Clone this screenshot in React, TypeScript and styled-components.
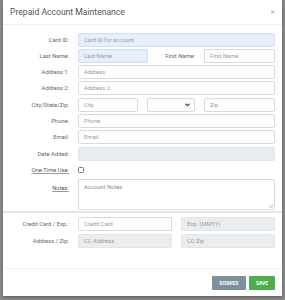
import React from 'react';
import styled, { createGlobalStyle } from 'styled-components';

const GlobalStyle = createGlobalStyle`
  html, body {
    margin: 0;
    padding: 0;
    background: #8a8a8a;
    font-family: Roboto, "Liberation Sans", Arial, sans-serif;
  }
  body {
    width: 285px;
    height: 300px;
    overflow: hidden;
  }
`;

const Modal = styled.div`
  margin-left: 3px;
  width: 279px;
  height: 296px;
  background: #fff;
  display: flex;
  flex-direction: column;
  box-shadow: 0 1px 3px rgba(0, 0, 0, 0.35);
`;

const Header = styled.div`
  height: 25px;
  display: flex;
  align-items: center;
  justify-content: space-between;
  padding: 0 7px 0 7px;
  border-bottom: 1px solid #eceeef;
  box-sizing: border-box;
`;

const Title = styled.h4`
  margin: 0;
  font-size: 8.6px;
  font-weight: 400;
  color: #555;
`;

const Close = styled.span`
  font-size: 9px;
  color: #b5b5b5;
  line-height: 1;
`;

const Body = styled.div`
  padding: 7.5px 7px 0 0;
  display: flex;
  flex-direction: column;
  gap: 2.3px;
`;

const Row = styled.div<{ $tall?: boolean }>`
  display: grid;
  grid-template-columns: 66px 1fr;
  column-gap: 9px;
  align-items: ${p => (p.$tall ? 'start' : 'center')};
  min-height: 14px;
`;

const Label = styled.label<{ $abbr?: boolean; $top?: boolean }>`
  text-align: right;
  font-size: 5.8px;
  color: ${p => (p.$abbr ? '#555' : '#666')};
  text-decoration: ${p => (p.$abbr ? 'underline' : 'none')};
  text-decoration-color: #999;
  white-space: nowrap;
  padding-top: ${p => (p.$top ? '6px' : '0')};
`;

const Input = styled.input<{ $variant?: 'fill' | 'disabled' }>`
  box-sizing: border-box;
  width: 100%;
  height: 14px;
  padding: 0 5px;
  font-family: inherit;
  font-size: 5.8px;
  color: #555;
  border-radius: 2px;
  outline: none;
  border: 1px solid
    ${p => (p.$variant === 'fill' ? '#d2dcf2' : p.$variant === 'disabled' ? '#e3e6e9' : '#d6dadf')};
  background: ${p =>
    p.$variant === 'fill' ? '#e8effc' : p.$variant === 'disabled' ? '#eaedf0' : '#fff'};
  &::placeholder {
    color: #9a9a9a;
  }
`;

const Pair = styled.div`
  display: grid;
  grid-template-columns: 70px 1fr 71px;
  column-gap: 9px;
  align-items: center;
`;

const CityRow = styled.div`
  display: grid;
  grid-template-columns: 60px 48px 1fr;
  column-gap: 9px;
`;

const Select = styled.div`
  box-sizing: border-box;
  height: 14px;
  border: 1px solid #d6dadf;
  border-radius: 2px;
  display: flex;
  align-items: center;
  justify-content: flex-end;
  padding-right: 4px;
`;

const Halves = styled.div`
  display: grid;
  grid-template-columns: 1fr 1fr;
  column-gap: 9px;
`;

const Check = styled.span`
  width: 6px;
  height: 6px;
  border: 1px solid #777;
  border-radius: 1.5px;
  box-sizing: border-box;
  display: block;
`;

const NotesBox = styled.div`
  position: relative;
`;

const Notes = styled.textarea`
  box-sizing: border-box;
  width: 100%;
  height: 31px;
  padding: 4px 5px;
  font-family: inherit;
  font-size: 5.8px;
  border: 1px solid #d6dadf;
  border-radius: 2px;
  resize: none;
  outline: none;
  margin: 0;
  display: block;
  &::placeholder {
    color: #8a8a8a;
  }
`;

const Grip = styled.svg`
  position: absolute;
  right: 2px;
  bottom: 2px;
`;

const Divider = styled.div`
  height: 2px;
  background: #e6e6e6;
  margin: 1px 0 4px;
`;

const CardBody = styled(Body)`
  padding-top: 0;
  gap: 3px;
`;

const Spacer = styled.div`
  flex: 1;
`;

const Footer = styled.div`
  border-top: 1px solid #f0f0f0;
  padding: 7px 7px 6px;
  display: flex;
  justify-content: flex-end;
  gap: 3px;
`;

const Button = styled.button<{ $kind: 'dismiss' | 'save' }>`
  height: 14px;
  padding: 0;
  width: ${p => (p.$kind === 'dismiss' ? '34px' : '26px')};
  border: none;
  border-radius: 1px;
  font-family: inherit;
  font-size: 4.8px;
  font-weight: 700;
  color: #fff;
  text-transform: uppercase;
  background: ${p => (p.$kind === 'dismiss' ? '#7c919c' : '#4cae4f')};
`;

const Chevron = () => (
  <svg width="5" height="4" viewBox="0 0 10 7">
    <path d="M1 1l4 4 4-4" fill="none" stroke="#444" strokeWidth="2.4" />
  </svg>
);

export default function App() {
  return (
    <>
      <GlobalStyle />
      <Modal>
        <Header>
          <Title>Prepaid Account Maintenance</Title>
          <Close>×</Close>
        </Header>
        <Body>
          <Row>
            <Label>Card ID:</Label>
            <Input $variant="fill" placeholder="Card ID for account" />
          </Row>
          <Row>
            <Label>Last Name:</Label>
            <Pair>
              <Input $variant="fill" placeholder="Last Name" />
              <Label>First Name:</Label>
              <Input placeholder="First Name" />
            </Pair>
          </Row>
          <Row>
            <Label>Address 1:</Label>
            <Input placeholder="Address" />
          </Row>
          <Row>
            <Label>Address 2:</Label>
            <Input placeholder="Address 2" />
          </Row>
          <Row>
            <Label>City/State/Zip:</Label>
            <CityRow>
              <Input placeholder="City" />
              <Select>
                <Chevron />
              </Select>
              <Input placeholder="Zip" />
            </CityRow>
          </Row>
          <Row>
            <Label>Phone:</Label>
            <Input placeholder="Phone" />
          </Row>
          <Row>
            <Label>Email:</Label>
            <Input placeholder="Email" />
          </Row>
          <Row>
            <Label>Date Added:</Label>
            <Input $variant="disabled" />
          </Row>
          <Row>
            <Label $abbr>One-Time Use:</Label>
            <Check />
          </Row>
          <Row $tall>
            <Label $abbr $top>Notes:</Label>
            <NotesBox>
              <Notes placeholder="Account Notes" />
              <Grip width="4" height="4" viewBox="0 0 4 4">
                <path d="M4 0L0 4M4 2L2 4" stroke="#999" strokeWidth="0.6" />
              </Grip>
            </NotesBox>
          </Row>
        </Body>
        <Divider />
        <CardBody>
          <Row>
            <Label>Credit Card / Exp.:</Label>
            <Halves>
              <Input placeholder="Credit Card" />
              <Input $variant="disabled" placeholder="Exp. (MMYY)" />
            </Halves>
          </Row>
          <Row>
            <Label>Address / Zip:</Label>
            <Halves>
              <Input $variant="disabled" placeholder="CC Address" />
              <Input $variant="disabled" placeholder="CC Zip" />
            </Halves>
          </Row>
        </CardBody>
        <Spacer />
        <Footer>
          <Button $kind="dismiss">Dismiss</Button>
          <Button $kind="save">Save</Button>
        </Footer>
      </Modal>
    </>
  );
}
